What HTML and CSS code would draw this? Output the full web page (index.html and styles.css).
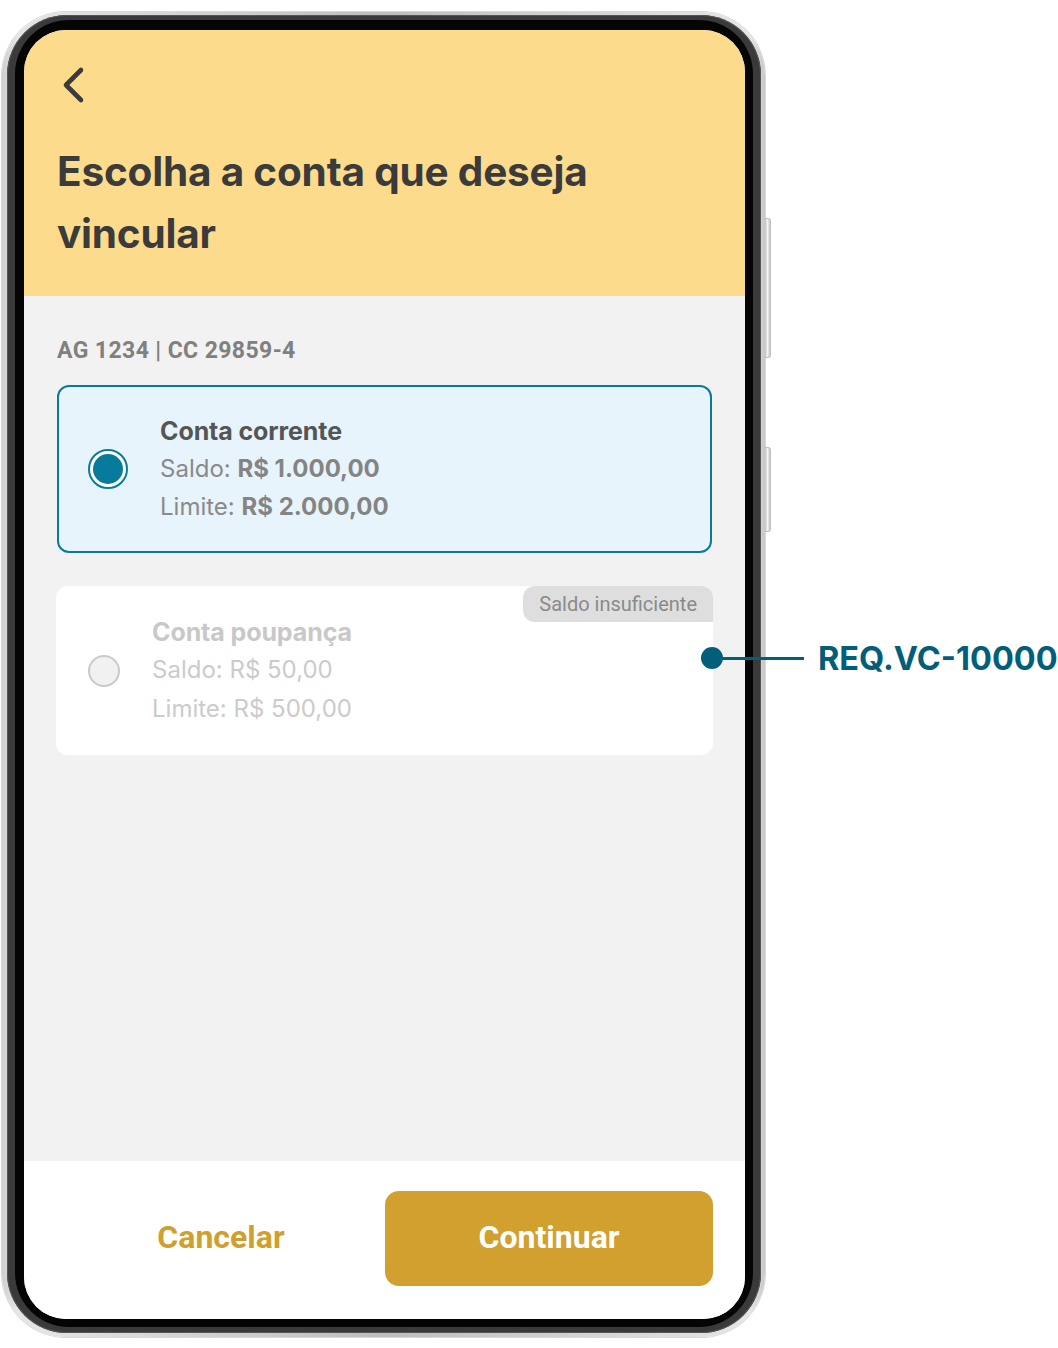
FILE: index.html
```html
<!DOCTYPE html>
<html lang="pt-BR">
<head>
<meta charset="utf-8">
<title>Escolha a conta</title>
<link rel="stylesheet" href="styles.css">
</head>
<body>
<div class="stage">
  <div class="phone">
    <span class="side-btn side-btn-1"></span>
    <span class="side-btn side-btn-2"></span>
    <div class="bezel">
      <div class="inner">
        <div class="screen">
          <header class="top">
            <button class="back" aria-label="Voltar">
              <svg width="24" height="38" viewBox="0 0 24 38"><polyline points="19,4 4,19 19,34" fill="none" stroke="#3b3b3b" stroke-width="4.6" stroke-linecap="round" stroke-linejoin="round"/></svg>
            </button>
            <h1 class="title">Escolha a conta que deseja vincular</h1>
          </header>
          <main class="content">
            <p class="agency">AG 1234 | CC 29859-4</p>
            <div class="card card-active">
              <span class="radio radio-on"><span class="dot"></span></span>
              <div class="info">
                <div class="name">Conta corrente</div>
                <div class="line">Saldo: <b>R$ 1.000,00</b></div>
                <div class="line">Limite: <b>R$ 2.000,00</b></div>
              </div>
            </div>
            <div class="card card-disabled">
              <span class="badge">Saldo insuficiente</span>
              <span class="radio radio-off"></span>
              <div class="info">
                <div class="name">Conta poupança</div>
                <div class="line">Saldo: R$ 50,00</div>
                <div class="line">Limite: R$ 500,00</div>
              </div>
            </div>
          </main>
          <footer class="actions">
            <button class="btn btn-text">Cancelar</button>
            <button class="btn btn-primary">Continuar</button>
          </footer>
        </div>
      </div>
    </div>
  </div>
  <div class="annotation">
    <span class="pin"></span>
    <span class="leader"></span>
    <span class="req">REQ.VC-10000</span>
  </div>
</div>
</body>
</html>
```

FILE: styles.css
```css
* { box-sizing: border-box; }
html, body { margin: 0; padding: 0; background: #ffffff; }
body { width: 1058px; height: 1348px; overflow: hidden; font-family: Inter, "Noto Sans", sans-serif; }

.stage { position: relative; width: 1058px; height: 1348px; padding: 12px 0 0 2px; }

.phone {
  position: relative;
  width: 763px;
  height: 1325px;
  border-radius: 64px;
  padding: 3px 4px 4px 5px;
  background: linear-gradient(90deg, #cfcfcf 0%, #e6e6e6 2%, #bdbdbd 50%, #e6e6e6 98%, #c8c8c8 100%);
  box-shadow: 0 0 0 1px #d8d8d8;
}
.side-btn {
  position: absolute;
  right: -6px;
  width: 6px;
  border-radius: 0 3px 3px 0;
  background: linear-gradient(90deg, #bdbdbd, #f4f4f4 50%, #c4c4c4);
  border: 1px solid #c0c0c0;
  border-left: none;
}
.side-btn-1 { top: 206px; height: 140px; }
.side-btn-2 { top: 435px; height: 85px; }

.bezel {
  height: 100%;
  border-radius: 60px;
  background: #3a3a3a;
  padding: 5px 8px 6px 8px;
  box-shadow: inset 0 0 0 1px #555;
}
.inner {
  height: 100%;
  border-radius: 54px;
  background: #050505;
  padding: 10px 8px 8px 9px;
}
.screen {
  height: 100%;
  border-radius: 42px;
  overflow: hidden;
  background: #f2f2f2;
  display: flex;
  flex-direction: column;
}

.top {
  height: 266px;
  flex: none;
  background: #fcdb8d;
  padding: 36px 33px 0 33px;
}
.back {
  display: block;
  border: 0;
  background: none;
  padding: 0;
  margin: 0 0 0 5px;
  width: 24px;
  height: 38px;
}
.back svg { display: block; }
.title {
  margin: 37px 0 0 0;
  font-family: Inter, sans-serif;
  font-weight: 700;
  font-size: 40.5px;
  line-height: 62px;
  letter-spacing: -0.2px;
  color: #3b3b3b;
  max-width: 620px;
}

.content {
  flex: 1;
  padding: 43px 33px 0 33px;
  display: flex;
  flex-direction: column;
}
.agency {
  margin: 0;
  font-family: Roboto, sans-serif;
  font-weight: 700;
  font-size: 23px;
  line-height: 24px;
  letter-spacing: 0.4px;
  color: #808080;
}

.card {
  position: relative;
  display: flex;
  align-items: center;
  border-radius: 12px;
}
.card-active {
  margin-top: 22px;
  height: 168px;
  background: #e8f4fb;
  border: 2px solid #0b7a98;
  padding-left: 29px;
  gap: 32px;
}
.card-disabled {
  margin: 33px -1px 0 -1px;
  height: 169px;
  background: #ffffff;
  padding-left: 32px;
  gap: 32px;
}

.radio {
  flex: none;
  display: flex;
  align-items: center;
  justify-content: center;
  border-radius: 50%;
}
.radio-on {
  width: 40px;
  height: 40px;
  border: 2px solid #0b7a98;
  background: #ffffff;
}
.radio-on .dot {
  width: 30px;
  height: 30px;
  border-radius: 50%;
  background: #087b9c;
}
.radio-off {
  width: 32px;
  height: 32px;
  border: 2px solid #c9c9c9;
  background: #f1f1f1;
}

.info { display: flex; flex-direction: column; }
.name {
  font-family: Inter, sans-serif;
  font-weight: 700;
  font-size: 25px;
  line-height: 38px;
  letter-spacing: -0.1px;
  color: #555555;
}
.line {
  font-family: Inter, sans-serif;
  font-weight: 400;
  font-size: 24px;
  line-height: 38.5px;
  color: #8a8a8a;
}
.line b { font-weight: 700; color: #848484; }
.card-disabled .name { color: #c8c8c8; }
.card-disabled .line { color: #cbcbcb; }

.badge {
  position: absolute;
  top: 0;
  right: 0;
  height: 36px;
  padding: 0 16px;
  display: flex;
  align-items: center;
  background: #dedede;
  border-radius: 12px 12px 0 12px;
  font-family: Roboto, sans-serif;
  font-size: 20px;
  color: #8a8a8a;
}

.actions {
  flex: none;
  height: 158px;
  background: #ffffff;
  padding: 30px 32px 33px 33px;
  display: grid;
  grid-template-columns: 1fr 1fr;
}
.btn {
  border: 0;
  border-radius: 14px;
  font-family: Roboto, sans-serif;
  font-weight: 700;
  font-size: 32px;
  padding: 0 0 3px 0;
  cursor: pointer;
}
.btn-text { background: none; color: #d09f2e; }
.btn-primary { background: #d1a02f; color: #ffffff; }

.annotation {
  position: absolute;
  left: 701px;
  top: 636px;
  display: flex;
  align-items: center;
  height: 44px;
}
.pin {
  width: 22px;
  height: 22px;
  border-radius: 50%;
  background: #035e79;
  flex: none;
}
.leader {
  width: 92px;
  height: 3px;
  margin-left: -11px;
  background: #035e79;
  flex: none;
}
.req {
  margin-left: 14px;
  font-family: Inter, sans-serif;
  font-weight: 700;
  font-size: 32.5px;
  color: #035e79;
}
```
